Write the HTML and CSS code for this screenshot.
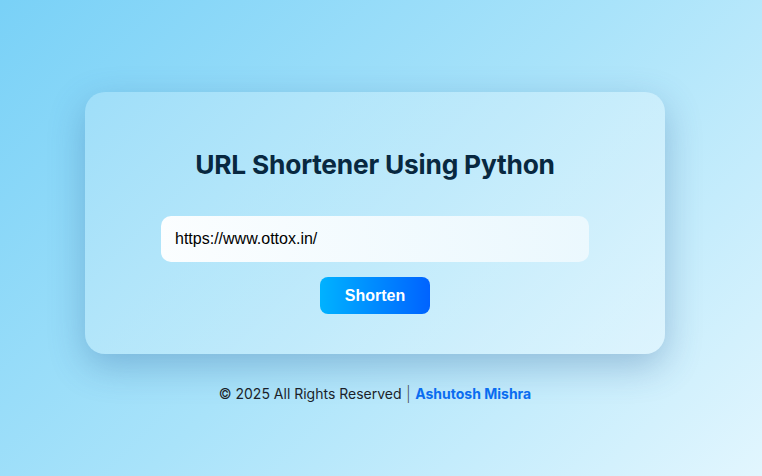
FILE: index.html
```html
<!DOCTYPE html>
<html lang="en">
<head>
<meta charset="utf-8">
<title>URL Shortener Using Python</title>
<link rel="stylesheet" href="styles.css">
</head>
<body>
<main class="page">
  <section class="card">
    <h1 class="title">URL Shortener Using Python</h1>
    <form class="form">
      <input class="url-input" type="text" value="https://www.ottox.in/">
      <button class="btn" type="button">Shorten</button>
    </form>
  </section>
  <footer class="footer">© 2025 All Rights Reserved <span class="sep">|</span> <span class="author">Ashutosh Mishra</span></footer>
</main>
</body>
</html>
```

FILE: styles.css
```css
html, body {
  margin: 0;
  padding: 0;
  height: 100%;
}
body {
  background: linear-gradient(135deg, #79d1f7 0%, #a9e3fa 50%, #e2f6fe 100%);
  font-family: "Inter", "Liberation Sans", sans-serif;
  overflow: hidden;
}
.page {
  display: flex;
  flex-direction: column;
  align-items: center;
  padding-top: 92px;
  padding-right: 12px;
}
.card {
  box-sizing: border-box;
  width: 580px;
  height: 262px;
  border-radius: 20px;
  background: linear-gradient(135deg, rgba(255,255,255,0.2), rgba(255,255,255,0.32));
  box-shadow: 0 12px 36px rgba(40, 90, 150, 0.32);
  display: flex;
  flex-direction: column;
  align-items: center;
  padding-top: 57px;
}
.title {
  margin: 0;
  font-size: 26.3px;
  font-weight: 700;
  line-height: 32px;
  color: #082840;
  letter-spacing: -0.2px;
}
.form {
  display: flex;
  flex-direction: column;
  align-items: center;
  margin-top: 35px;
  gap: 15px;
}
.url-input {
  box-sizing: border-box;
  width: 428px;
  height: 46px;
  border: none;
  border-radius: 10px;
  padding: 0 14px;
  background: linear-gradient(90deg, rgba(255,255,255,0.95), rgba(238,249,254,0.9));
  font-family: "Liberation Sans", Arial, sans-serif;
  font-size: 16px;
  color: #000;
  outline: none;
}
.btn {
  width: 110px;
  height: 37px;
  border: none;
  border-radius: 8px;
  background: linear-gradient(90deg, #00b2ff, #0063ff);
  color: #fff;
  font-family: "Liberation Sans", Arial, sans-serif;
  font-weight: 700;
  font-size: 16px;
  cursor: pointer;
}
.footer {
  margin-top: 31px;
  font-size: 14px;
  line-height: 17px;
  color: #1b1f2a;
}
.sep {
  font-family: "DejaVu Sans", sans-serif;
  font-weight: 200;
  font-size: 17px;
  color: #444;
}
.author {
  color: #0a6cf0;
  font-weight: 700;
}
```
